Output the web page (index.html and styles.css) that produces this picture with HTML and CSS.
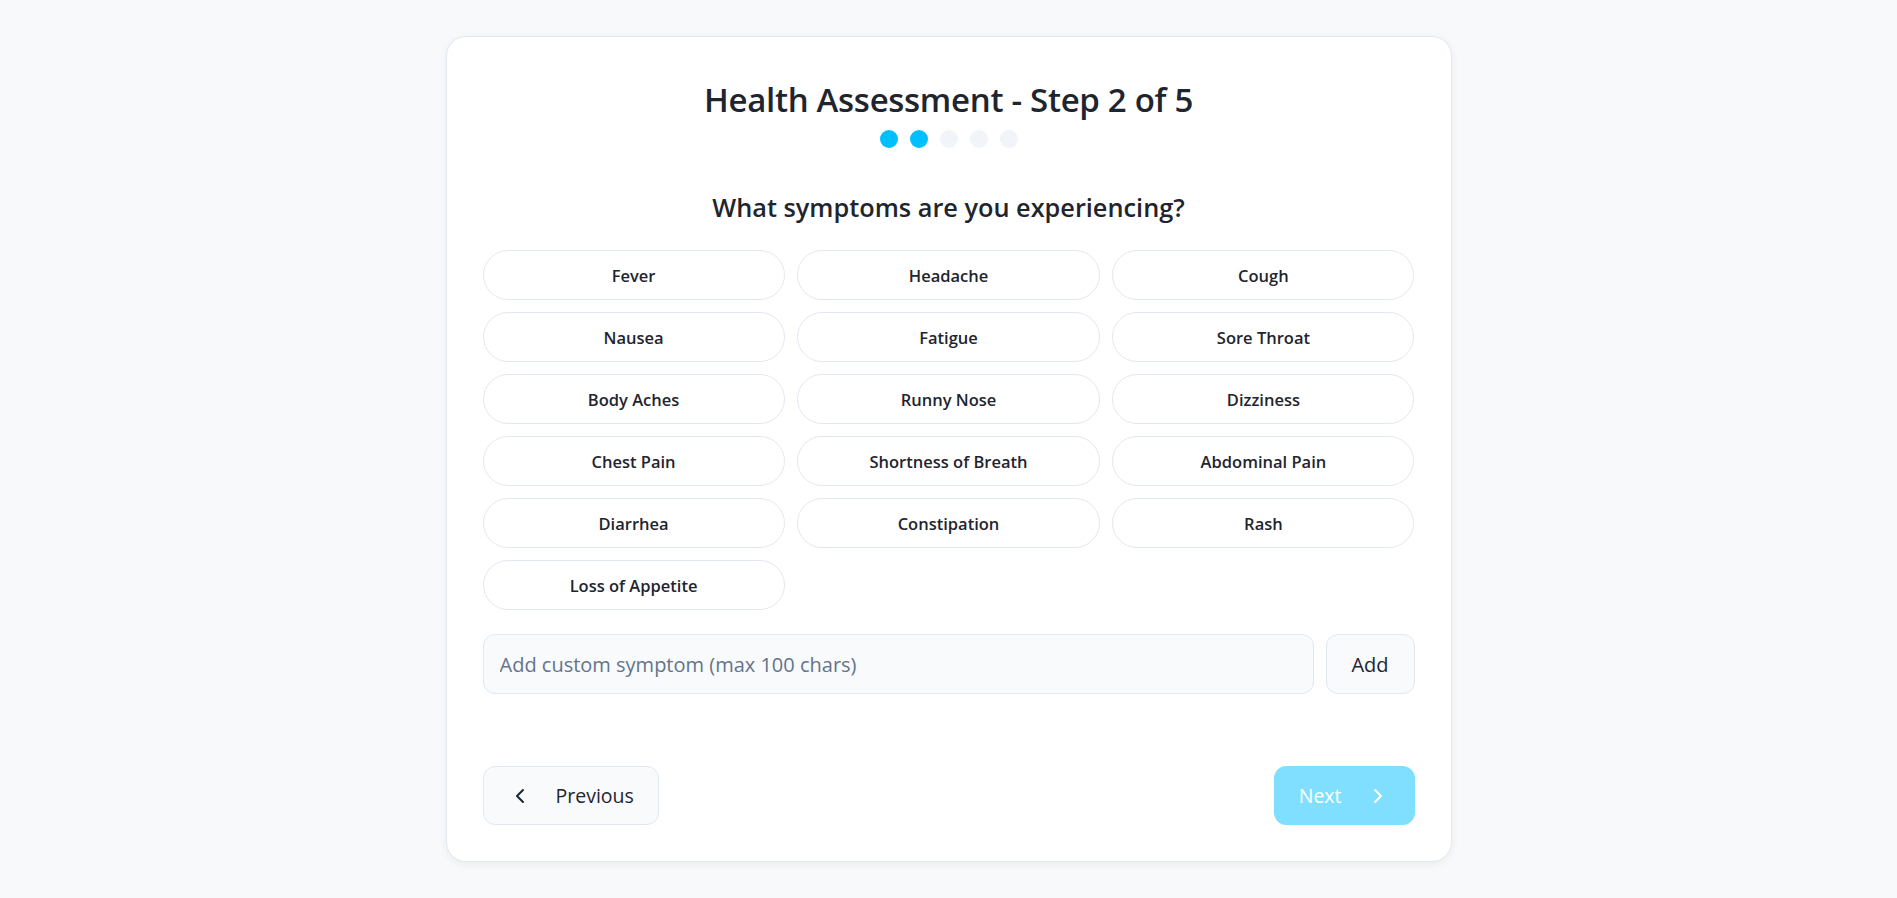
FILE: index.html
```html
<!DOCTYPE html>
<html lang="en">
<head>
<meta charset="utf-8">
<title>Health Assessment</title>
<link rel="stylesheet" href="styles.css">
</head>
<body>
<main class="page">
  <section class="card">
    <header class="card-header">
      <h1 class="title">Health Assessment - Step 2 of 5</h1>
      <div class="dots">
        <span class="dot dot-active"></span>
        <span class="dot dot-active"></span>
        <span class="dot"></span>
        <span class="dot"></span>
        <span class="dot"></span>
      </div>
    </header>
    <h2 class="question">What symptoms are you experiencing?</h2>
    <div class="chips">
      <button class="chip">Fever</button>
      <button class="chip">Headache</button>
      <button class="chip">Cough</button>
      <button class="chip">Nausea</button>
      <button class="chip">Fatigue</button>
      <button class="chip">Sore Throat</button>
      <button class="chip">Body Aches</button>
      <button class="chip">Runny Nose</button>
      <button class="chip">Dizziness</button>
      <button class="chip">Chest Pain</button>
      <button class="chip">Shortness of Breath</button>
      <button class="chip">Abdominal Pain</button>
      <button class="chip">Diarrhea</button>
      <button class="chip">Constipation</button>
      <button class="chip">Rash</button>
      <button class="chip">Loss of Appetite</button>
    </div>
    <div class="custom-row">
      <input class="custom-input" type="text" placeholder="Add custom symptom (max 100 chars)">
      <button class="add-btn">Add</button>
    </div>
    <nav class="nav">
      <button class="nav-btn prev-btn">
        <svg class="chev" width="24" height="24" viewBox="0 0 24 24" fill="none" stroke="currentColor" stroke-width="2" stroke-linecap="round" stroke-linejoin="round"><path d="M15 18l-6-6 6-6"/></svg>
        <span>Previous</span>
      </button>
      <button class="nav-btn next-btn">
        <span>Next</span>
        <svg class="chev" width="24" height="24" viewBox="0 0 24 24" fill="none" stroke="currentColor" stroke-width="2" stroke-linecap="round" stroke-linejoin="round"><path d="M9 18l6-6-6-6"/></svg>
      </button>
    </nav>
  </section>
</main>
</body>
</html>
```
FILE: styles.css
```css
* { box-sizing: border-box; }

body {
  margin: 0;
  background: #f8f9fb;
  font-family: "Open Sans", "Noto Sans", "Liberation Sans", sans-serif;
  color: #1f252e;
}

.page {
  display: flex;
  justify-content: center;
  padding: 36px 0 36px;
}

.card {
  width: 1006px;
  background: #ffffff;
  border: 1px solid #e2e8f0;
  border-radius: 20px;
  padding: 36px;
  box-shadow: 0 2px 8px rgba(15, 23, 42, 0.06);
}

.card-header {
  text-align: center;
}

.title {
  margin: 0;
  font-size: 33px;
  font-weight: 600;
  line-height: 54px;
  letter-spacing: -0.3px;
  color: #1f252e;
}

.dots {
  display: flex;
  justify-content: center;
  gap: 12px;
  margin-top: 3px;
}

.dot {
  width: 18px;
  height: 18px;
  border-radius: 50%;
  background: #f1f4f8;
}

.dot-active {
  background: #00bfff;
}

.question {
  margin: 43px 0 0;
  text-align: center;
  font-size: 25.3px;
  font-weight: 600;
  line-height: 32px;
  color: #1f252e;
}

.chips {
  margin-top: 27px;
  display: grid;
  grid-template-columns: repeat(3, 1fr);
  gap: 12px 12.8px;
}

.chip {
  height: 50px;
  border: 1px solid #e2e8f0;
  border-radius: 999px;
  background: #ffffff;
  font-family: inherit;
  font-size: 16.5px;
  font-weight: 600;
  color: #1f252e;
  cursor: pointer;
}

.custom-row {
  margin-top: 24px;
  display: flex;
  gap: 12px;
}

.custom-input {
  flex: 1;
  height: 60px;
  border: 1px solid #e2e8f0;
  border-radius: 12px;
  background: #f8fafc;
  padding: 0 16px;
  font-family: inherit;
  font-size: 20px;
  color: #1f252e;
}

.custom-input::placeholder {
  color: #64748b;
}

.add-btn {
  width: 89px;
  height: 60px;
  border: 1px solid #e2e8f0;
  border-radius: 12px;
  background: #f8fafc;
  font-family: inherit;
  font-size: 20px;
  color: #1f252e;
}

.nav {
  margin-top: 72px;
  display: flex;
  justify-content: space-between;
}

.nav-btn {
  height: 59px;
  display: flex;
  align-items: center;
  gap: 24px;
  padding: 0 24px;
  border-radius: 12px;
  font-family: inherit;
  font-size: 19.5px;
}

.prev-btn {
  border: 1px solid #e2e8f0;
  background: #f8fafc;
  color: #1f252e;
}

.next-btn {
  border: 1px solid #80dfff;
  background: #80dfff;
  color: #ffffff;
}

.chev {
  flex: none;
}
```
